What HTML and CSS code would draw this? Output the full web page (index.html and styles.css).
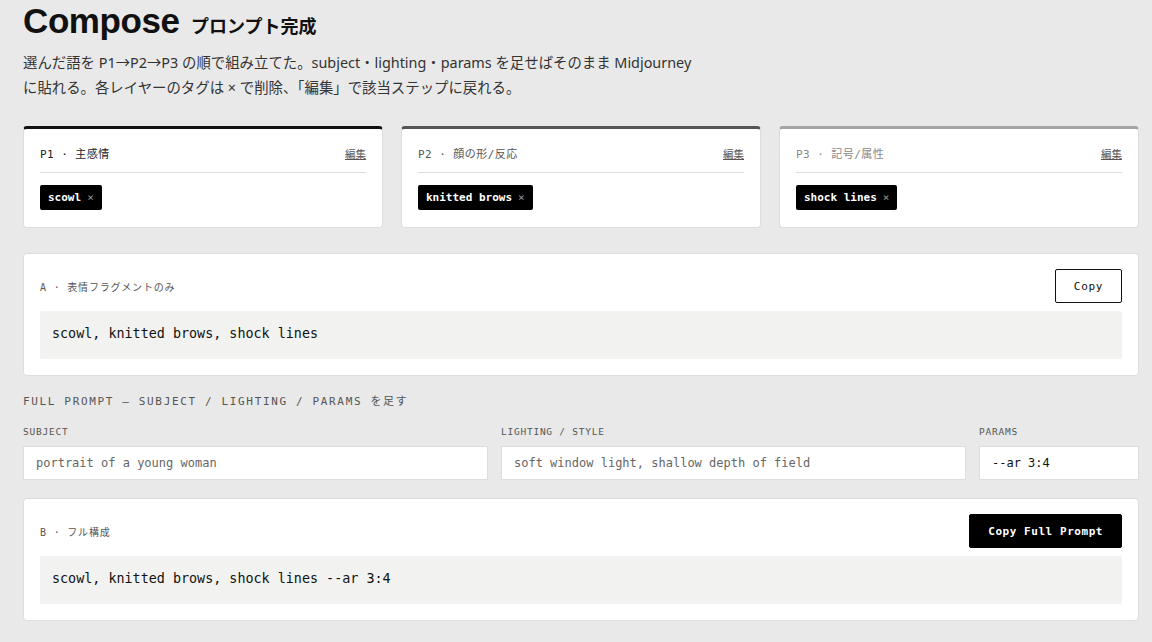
FILE: index.html
```html
<!DOCTYPE html>
<html lang="ja">
<head>
  <meta charset="UTF-8">
  <meta name="viewport" content="width=device-width, initial-scale=1.0">
  <title>Compose — プロンプト完成</title>
  <link rel="stylesheet" href="styles.css">
</head>
<body>
  <header class="page-head">
    <h1>Compose <small>プロンプト完成</small></h1>
    <p class="lead">選んだ語を P1→P2→P3 の順で組み立てた。subject・lighting・params を足せばそのまま Midjourney に貼れる。各レイヤーのタグは × で削除、「編集」で該当ステップに戻れる。</p>
  </header>

  <!-- Layer summary -->
  <div class="layers">
    <div class="layer layer-1">
      <div class="layer-head">
        <span class="layer-name">P1 · 主感情</span>
        <a href="#" class="edit-link">編集</a>
      </div>
      <div class="tags">
        <span class="tag">scowl <span class="tag-x">×</span></span>
      </div>
    </div>
    <div class="layer layer-2">
      <div class="layer-head">
        <span class="layer-name">P2 · 顔の形/反応</span>
        <a href="#" class="edit-link">編集</a>
      </div>
      <div class="tags">
        <span class="tag">knitted brows <span class="tag-x">×</span></span>
      </div>
    </div>
    <div class="layer layer-3">
      <div class="layer-head">
        <span class="layer-name">P3 · 記号/属性</span>
        <a href="#" class="edit-link">編集</a>
      </div>
      <div class="tags">
        <span class="tag">shock lines <span class="tag-x">×</span></span>
      </div>
    </div>
  </div>

  <!-- A: fragment only -->
  <section class="output">
    <div class="output-head">
      <span class="output-label">A · 表情フラグメントのみ</span>
      <button class="btn btn-outline">Copy</button>
    </div>
    <div class="output-text">scowl, knitted brows, shock lines</div>
  </section>

  <!-- Extra fields -->
  <h2 class="section-title">FULL PROMPT — SUBJECT / LIGHTING / PARAMS を足す</h2>
  <div class="fields">
    <label class="field">
      <span class="field-label">SUBJECT</span>
      <input type="text" placeholder="portrait of a young woman">
    </label>
    <label class="field">
      <span class="field-label">LIGHTING / STYLE</span>
      <input type="text" placeholder="soft window light, shallow depth of field">
    </label>
    <label class="field">
      <span class="field-label">PARAMS</span>
      <input type="text" value="--ar 3:4">
    </label>
  </div>

  <!-- B: full prompt -->
  <section class="output">
    <div class="output-head">
      <span class="output-label">B · フル構成</span>
      <button class="btn btn-solid">Copy Full Prompt</button>
    </div>
    <div class="output-text">scowl, knitted brows, shock lines --ar 3:4</div>
  </section>
</body>
</html>
```

FILE: styles.css
```css
* {
  box-sizing: border-box;
}

body {
  margin: 0;
  padding: 0 13px 0 23px;
  background: #e9e9e9;
  color: #111;
  font-family: "Noto Sans", "Noto Sans CJK JP", sans-serif;
}

.page-head h1 {
  margin: 0;
  padding-top: 1px;
  font-family: "Liberation Sans", Arial, sans-serif;
  font-size: 35px;
  font-weight: 700;
  letter-spacing: -0.4px;
  line-height: 40px;
}

.page-head h1 small {
  margin-left: 2px;
  font-family: "Noto Sans CJK JP", sans-serif;
  font-size: 18px;
  font-weight: 700;
  letter-spacing: 0;
}

.lead {
  max-width: 680px;
  margin: 5px 0 0;
  font-size: 14.4px;
  line-height: 25px;
  color: #333;
}

/* Layer cards */
.layers {
  display: grid;
  grid-template-columns: repeat(3, 1fr);
  gap: 18px;
  margin-top: 26px;
}

.layer {
  background: #fff;
  border: 1px solid #ddd;
  border-top: 3px solid #111;
  border-radius: 4px;
  padding: 12px 16px 17px;
}

.layer-2 { border-top-color: #555; }
.layer-3 { border-top-color: #a5a5a5; }

.layer-head {
  display: flex;
  justify-content: space-between;
  align-items: center;
  padding: 4px 0 11px;
  border-bottom: 1px solid #ddd;
}

.layer-name {
  font-family: "DejaVu Sans Mono", "Noto Sans CJK JP", monospace;
  font-size: 11px;
  letter-spacing: 0.04em;
  color: #222;
}

.layer-2 .layer-name { color: #555; }
.layer-3 .layer-name { color: #888; }

.edit-link {
  font-family: "Noto Sans CJK JP", sans-serif;
  font-size: 10.5px;
  color: #555;
  text-decoration: underline;
}

.tags {
  display: flex;
  gap: 6px;
  padding-top: 12px;
}

.tag {
  display: inline-flex;
  align-items: center;
  gap: 6px;
  height: 25px;
  padding: 0 8px;
  background: #000;
  color: #fff;
  border-radius: 2px;
  font-family: "DejaVu Sans Mono", monospace;
  font-size: 11px;
  font-weight: 700;
}

.tag-x {
  color: #999;
  font-weight: 400;
  font-size: 11px;
}

/* Output blocks */
.output {
  background: #fff;
  border: 1px solid #ddd;
  border-radius: 4px;
  padding: 15px 16px 16px;
  margin-top: 25px;
}

.output-head {
  display: flex;
  justify-content: space-between;
  align-items: center;
  margin-bottom: 8px;
}

.output-label {
  font-family: "DejaVu Sans Mono", "Noto Sans CJK JP", monospace;
  font-size: 10px;
  letter-spacing: 0.08em;
  color: #555;
}

.btn {
  height: 34px;
  padding: 0 18px;
  border-radius: 2px;
  font-family: "DejaVu Sans Mono", monospace;
  font-size: 11px;
  letter-spacing: 0.06em;
  cursor: pointer;
}

.btn-outline {
  background: #fff;
  border: 1px solid #111;
  color: #111;
}

.btn-solid {
  background: #000;
  border: 1px solid #000;
  color: #fff;
  font-weight: 700;
  letter-spacing: 0.05em;
}

.output-text {
  background: #f2f2f0;
  border-radius: 2px;
  padding: 14px 12px 16px;
  font-family: "DejaVu Sans Mono", monospace;
  font-size: 13.4px;
  line-height: 18px;
  color: #111;
}

/* Full prompt fields */
.section-title {
  margin: 16px 0 0;
  font-family: "DejaVu Sans Mono", "Noto Sans CJK JP", monospace;
  font-size: 11px;
  font-weight: 400;
  letter-spacing: 0.15em;
  color: #555;
}

.fields {
  display: grid;
  grid-template-columns: 1fr 1fr 160px;
  gap: 13px;
  margin-top: 18px;
}

.field {
  display: flex;
  flex-direction: column;
  gap: 9px;
}

.field-label {
  font-family: "DejaVu Sans Mono", monospace;
  font-size: 9.5px;
  letter-spacing: 0.08em;
  color: #555;
}

.field input {
  height: 34px;
  padding: 0 12px;
  border: 1px solid #ddd;
  border-radius: 0;
  background: #fff;
  font-family: "DejaVu Sans Mono", monospace;
  font-size: 12px;
  color: #111;
}

.field input::placeholder {
  color: #666;
}

.fields + .output {
  margin-top: 18px;
}
```
